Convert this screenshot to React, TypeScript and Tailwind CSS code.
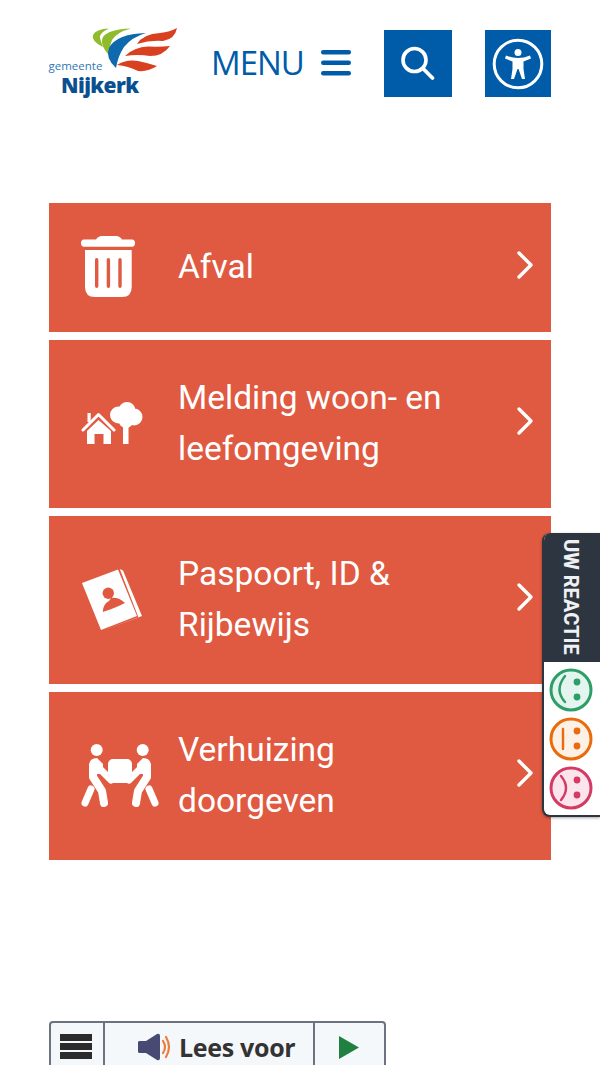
import React from "react";

const Chevron = () => (
  <svg width="20" height="30" viewBox="0 0 20 30" className="mb-[6px] shrink-0" fill="none" stroke="#fff" strokeWidth="3.4" strokeLinecap="round" strokeLinejoin="round">
    <path d="M4 3 L16 15 L4 27" />
  </svg>
);

const Trash = () => (
  <svg width="54" height="61" viewBox="0 0 54 61" fill="#fff" className="mb-[2px]">
    <path d="M3 3.500 H15 Q17 0 21 0 H35 Q39 0 41 3.500 H51 Q54 3.500 54 7 Q54 10.700 51 10.700 H3 Q0 10.700 0 7 Q0 3.500 3 3.500 Z" />
    <path fillRule="evenodd" d="M4 14 H50.700 V51 Q50.700 61 41 61 H14 Q4 61 4 51 Z M15.700 22 Q14 22 14 24 V50 Q14 52 15.700 52 Q17.400 52 17.400 50 V24 Q17.400 22 15.700 22 Z M27.400 22 Q25.700 22 25.700 24 V50 Q25.700 52 27.400 52 Q29.100 52 29.100 50 V24 Q29.100 22 27.400 22 Z M39 22 Q37.300 22 37.300 24 V50 Q37.300 52 39 52 Q40.700 52 40.700 50 V24 Q40.700 22 39 22 Z" />
  </svg>
);

const HouseTree = () => (
  <svg width="62" height="45" viewBox="0 0 62 45" fill="#fff" className="mb-[3px]">
    <rect x="6.500" y="13" width="3.200" height="9" />
    <path d="M2 30 L17.500 14.500 L33 30" fill="none" stroke="#fff" strokeWidth="3" strokeLinecap="round" strokeLinejoin="round" />
    <path d="M6 31 L17.500 20 L30 31 V44 H22.500 V34 H13.500 V44 H6 Z" />
    <rect x="42" y="24" width="5.500" height="20" />
    <circle cx="37.500" cy="15" r="8.500" />
    <circle cx="46" cy="10.500" r="8.500" />
    <circle cx="53" cy="17" r="8.500" />
    <circle cx="45" cy="20.500" r="7.500" />
  </svg>
);

const Passport = () => (
  <svg width="62" height="64" viewBox="0 0 62 64" fill="#fff">
    <path d="M1 15 L37 1.500 L56 48 L20 62 Z" />
    <path d="M38.800 1 L42 2.500 L61 48 L20.500 62.800 L57.500 49.500 Z" />
    <g fill="#e05a41">
      <circle cx="27.300" cy="25.300" r="5.700" />
      <path d="M21.700 44 Q22 36 28 33 L30 30 Q38 29 44 35 Q32 41 21.700 44 Z" />
    </g>
  </svg>
);

const Movers = () => (
  <svg width="78" height="64" viewBox="0 0 78 64" fill="#fff">
    <circle cx="15.700" cy="6" r="6" />
    <circle cx="61.700" cy="6" r="6" />
    <rect x="27" y="15" width="24" height="24" rx="5" />
    <g fill="none" stroke="#fff" strokeLinecap="round" strokeLinejoin="round">
      <path d="M12 23 V33 L21 47 L23 59" strokeWidth="8" />
      <path d="M66 23 V33 L57 47 L55 59" strokeWidth="8" />
      <path d="M14 20 L30 36" strokeWidth="7" />
      <path d="M64 20 L48 36" strokeWidth="7" />
      <path d="M10 45 L4 59" strokeWidth="7" />
      <path d="M68 45 L74 59" strokeWidth="7" />
    </g>
    <path d="M8 22 Q8 14 16 14 L22 20 L22 30 H8 Z" />
    <path d="M70 22 Q70 14 62 14 L56 20 L56 30 H70 Z" />
  </svg>
);

const rows: { icon: React.ReactNode; lines: string[]; h: string }[] = [
  { icon: <Trash />, lines: ["Afval"], h: "h-[129px]" },
  { icon: <HouseTree />, lines: ["Melding woon- en", "leefomgeving"], h: "h-[168px]" },
  { icon: <Passport />, lines: ["Paspoort, ID &", "Rijbewijs"], h: "h-[168px]" },
  { icon: <Movers />, lines: ["Verhuizing", "doorgeven"], h: "h-[168px]" },
];

const Face = ({ stroke, fill, kind }: { stroke: string; fill: string; kind: "happy" | "flat" | "sad" }) => (
  <svg width="46" height="46" viewBox="0 0 46 46">
    <circle cx="23" cy="23" r="20" fill={fill} stroke={stroke} strokeWidth="3" />
    <circle cx="29" cy="15" r="3.400" fill={stroke} />
    <circle cx="29" cy="30" r="3.400" fill={stroke} />
    {kind === "happy" && <path d="M17 9 Q6 23 17 35" fill="none" stroke={stroke} strokeWidth="2.400" strokeLinecap="round" />}
    {kind === "flat" && <path d="M15 13 V33" fill="none" stroke={stroke} strokeWidth="2.400" strokeLinecap="round" />}
    {kind === "sad" && <path d="M13 11 Q23 23 13 35" fill="none" stroke={stroke} strokeWidth="2.400" strokeLinecap="round" />}
  </svg>
);

export default function App() {
  return (
    <div className="relative h-[1065px] w-[600px] overflow-hidden bg-white font-['Roboto',sans-serif]">
      <header className="flex h-[98px] items-start pl-[48px] pr-[49px] pt-[27px]">
        <svg width="130" height="74" viewBox="0 0 130 74" className="shrink-0">
          <path d="M55 20 Q43 14 45 8 Q48 2 61 1.500 Q51 6 52 11 Q53 15 55 20 Z" fill="#8fbb2d" />
          <path d="M62 29 Q51 18 55 10 Q61 2 83 1.500 Q69 5 64 13 Q61 20 62 29 Z" fill="#8fbb2d" />
          <path d="M68 41 Q57 31 61 21 Q68 7 98 6 Q84 10 76 20 Q70 29 68 41 Z" fill="#0f69ad" />
          <path d="M89 17 Q95 7 112 6 Q122 5 129 1 Q127 12 115 14 Q102 13 89 17 Z" fill="#d8401f" />
          <path d="M77 29 Q86 20 100 19.500 Q112 20 122 19 Q115 29 102 29 Q90 27 77 29 Z" fill="#d8401f" />
          <path d="M69 38 Q78 32 90 34 Q100 36 109 39 Q100 45 90 44 Q80 39 69 38 Z" fill="#d8401f" />
          <text x="0.500" y="43" fontFamily="'Open Sans', sans-serif" fontSize="11.500" fill="#2f78b4">gemeente</text>
          <text x="13" y="66" fontFamily="'Open Sans', sans-serif" fontWeight="800" fontSize="21" letterSpacing="-0.600" fill="#0a4f8f">Nijkerk</text>
        </svg>
        <span className="ml-[33px] mt-[14px] font-['Open_Sans',sans-serif] text-[33px] leading-[44px] tracking-[-1px] text-[#005ca9]">MENU</span>
        <svg width="30" height="26" viewBox="0 0 30 26" className="ml-[17px] mt-[23px] shrink-0" fill="#005ca9">
          <rect x="0" y="0" width="30" height="4.500" rx="2.200" />
          <rect x="0" y="10.500" width="30" height="4.500" rx="2.200" />
          <rect x="0" y="21" width="30" height="4.500" rx="2.200" />
        </svg>
        <div className="ml-[33px] mt-[3px] flex h-[67px] w-[68px] shrink-0 items-center justify-center bg-[#005ca9]">
          <svg width="36" height="36" viewBox="0 0 36 36" fill="none" stroke="#fff" strokeWidth="3.600" strokeLinecap="round">
            <circle cx="14.500" cy="14" r="11.500" />
            <path d="M23 22.500 L32.500 32" strokeWidth="3.800" />
          </svg>
        </div>
        <div className="ml-auto mt-[3px] flex h-[67px] w-[66px] shrink-0 items-center justify-center bg-[#005ca9]">
          <svg width="52" height="52" viewBox="0 0 52 52">
            <circle cx="26" cy="26" r="23.800" fill="none" stroke="#fff" strokeWidth="3" />
            <circle cx="26" cy="14.500" r="3.500" fill="#fff" />
            <path d="M14 17.500 Q20 20 26 20 Q32 20 38 17.500 L39 20.500 L31.500 23.500 V31 L33 41 H30 L26.500 31 H25.500 L22 41 H19 L20.500 31 V23.500 L13 20.500 Z" fill="#fff" />
          </svg>
        </div>
      </header>

      <main className="ml-[49px] mt-[105px] flex w-[502px] flex-col gap-2">
        {rows.map((r) => (
          <div key={r.lines[0]} className={`flex items-center bg-[#e05a41] pr-[16px] ${r.h}`}>
            <div className="flex w-[129px] shrink-0 justify-start pl-[32px]">{r.icon}</div>
            <div className="flex-1 pb-[1px] text-[33.5px] leading-[50.500px] text-white">
              {r.lines.map((l) => (
                <div key={l}>{l}</div>
              ))}
            </div>
            <Chevron />
          </div>
        ))}
      </main>

      <div className="ml-[49px] mt-[161px] flex h-[60px] w-[337px] rounded-t-[4px] border-2 border-[#6b7280] bg-[#f4f8fb]">
        <div className="flex w-[52px] shrink-0 flex-col gap-[2px] pl-[9px] pr-[11px] pt-[11px]">
          <div className="h-[7px] bg-[#2b2b2b]" />
          <div className="h-[7px] bg-[#2b2b2b]" />
          <div className="h-[7px] bg-[#2b2b2b]" />
        </div>
        <div className="flex w-[212px] shrink-0 items-start gap-[7px] border-x-2 border-[#6b7280] pl-[33px] pt-[6px]">
          <svg width="34" height="28" viewBox="0 0 34 28" className="mt-[4px] shrink-0">
            <path d="M0 9 Q0 8 2 8 H8 L19 1 Q22 0 22 3 V25 Q22 28 19 27 L8 20 H2 Q0 20 0 19 Z" fill="#474a73" />
            <path d="M25 8 Q29 14 25 20 M28 4 Q34 14 28 24" fill="none" stroke="#ea7c3f" strokeWidth="2.200" strokeLinecap="round" />
          </svg>
          <span className="font-['Open_Sans',sans-serif] text-[25px] font-bold leading-[36px] tracking-[-0.3px] text-[#333]">Lees voor</span>
        </div>
        <div className="flex flex-1 items-start pl-[24px] pt-[13px]">
          <svg width="20" height="23" viewBox="0 0 20 23" fill="#1f8040">
            <path d="M0 0 L20 11.500 L0 23 Z" />
          </svg>
        </div>
      </div>

      <aside className="absolute left-[542px] top-[533px] flex w-[58px] flex-col overflow-hidden rounded-l-[8px] border-b-2 border-l-2 border-[#2c3540] bg-white shadow-[0_1px_3px_rgba(0,0,0,0.35)]">
        <div className="flex h-[129px] items-start justify-center bg-[#2c3540] pr-[2px] pt-[6px]">
          <span className="font-['Roboto',sans-serif] text-[20px] font-extrabold leading-[24px] text-[#eef0f2] [writing-mode:vertical-rl]">UW REACTIE</span>
        </div>
        <div className="flex flex-col gap-[3px] pb-[4px] pl-[4px] pt-[5px]">
          <Face stroke="#2e9e68" fill="#e3f5ee" kind="happy" />
          <Face stroke="#ea6a0c" fill="#fdf0e4" kind="flat" />
          <Face stroke="#d33a64" fill="#fce4ec" kind="sad" />
        </div>
      </aside>
    </div>
  );
}
